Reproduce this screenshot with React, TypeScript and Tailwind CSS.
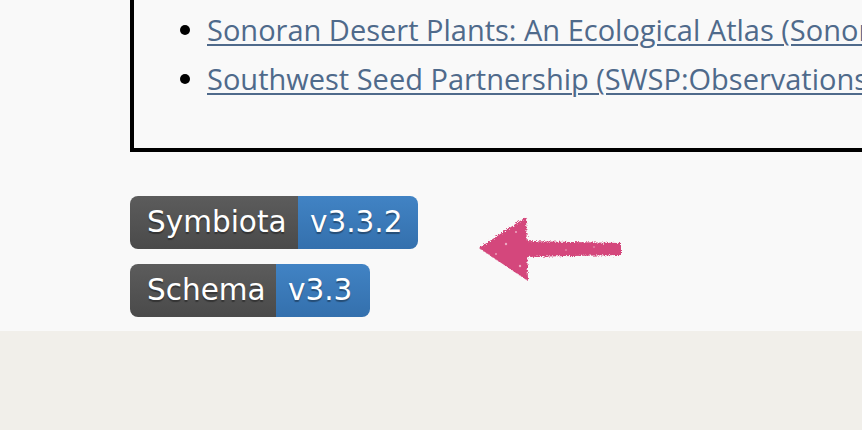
const links = [
  "Sonoran Desert Plants: An Ecological Atlas (Sonoran Desert Plants)",
  "Southwest Seed Partnership (SWSP:Observations)",
];

type BadgeProps = {
  label: string;
  version: string;
  labelWidth: string;
  versionWidth: string;
};

function Badge({ label, version, labelWidth, versionWidth }: BadgeProps) {
  return (
    <div
      className="flex h-[53px] overflow-hidden rounded-[8px] text-[29.5px] text-white"
      style={{ fontFamily: '"DejaVu Sans", Verdana, sans-serif' }}
    >
      <span
        className={`flex items-center bg-gradient-to-b from-[#5c5c5c] to-[#4a4a4a] pl-[17px] [text-shadow:0_2px_1px_rgba(0,0,0,0.35)] ${labelWidth}`}
      >
        {label}
      </span>
      <span
        className={`flex items-center bg-gradient-to-b from-[#4183c4] to-[#3470ad] pl-[12px] [text-shadow:0_2px_1px_rgba(0,0,0,0.35)] ${versionWidth}`}
      >
        {version}
      </span>
    </div>
  );
}

function HandArrow() {
  return (
    <svg width="150" height="70" viewBox="0 0 150 70" className="mt-[18px] ml-[58px]">
      <defs>
        <filter id="chalk" x="-10%" y="-20%" width="120%" height="140%">
          <feTurbulence type="fractalNoise" baseFrequency="1.2" numOctaves="2" seed="4" result="noise" />
          <feDisplacementMap in="SourceGraphic" in2="noise" scale="5" result="rough" />
          <feGaussianBlur in="rough" stdDeviation="0.5" />
        </filter>
      </defs>
      <g fill="#d4477b" filter="url(#chalk)">
        <polygon points="3,34 50,3 52,67" />
        <polygon points="48,27 145,29 145,41 48,43" />
      </g>
      <g fill="#f3c2d3" opacity="0.8">
        <circle cx="30" cy="30" r="1.2" />
        <circle cx="40" cy="18" r="1" />
        <circle cx="44" cy="52" r="1.2" />
        <circle cx="20" cy="40" r="0.9" />
        <circle cx="90" cy="36" r="0.8" />
        <circle cx="118" cy="33" r="0.8" />
      </g>
    </svg>
  );
}

export default function App() {
  return (
    <div className="min-h-[430px] overflow-hidden bg-[#f1efea]">
      <main className="bg-[#f9f9f9] pl-[130px] pb-[14px]">
        <section className="w-[800px] border-4 border-t-0 border-black pt-[5px] pb-[45px]">
          <ul
            className="text-[29px] leading-[49px] text-[#4f6a8b]"
            style={{ fontFamily: '"Open Sans", sans-serif' }}
          >
            {links.map((link) => (
              <li key={link} className="flex items-center whitespace-nowrap">
                <span className="ml-[46px] mr-[17px] h-[10px] w-[10px] shrink-0 rounded-full bg-black" />
                <a href="#" className="underline decoration-2 underline-offset-[3px]">
                  {link}
                </a>
              </li>
            ))}
          </ul>
        </section>
        <div className="mt-[44px] flex">
          <div className="flex flex-col items-start gap-[15px]">
            <Badge label="Symbiota" version="v3.3.2" labelWidth="w-[168px]" versionWidth="w-[120px]" />
            <Badge label="Schema" version="v3.3" labelWidth="w-[146px]" versionWidth="w-[94px]" />
          </div>
          <HandArrow />
        </div>
      </main>
    </div>
  );
}
